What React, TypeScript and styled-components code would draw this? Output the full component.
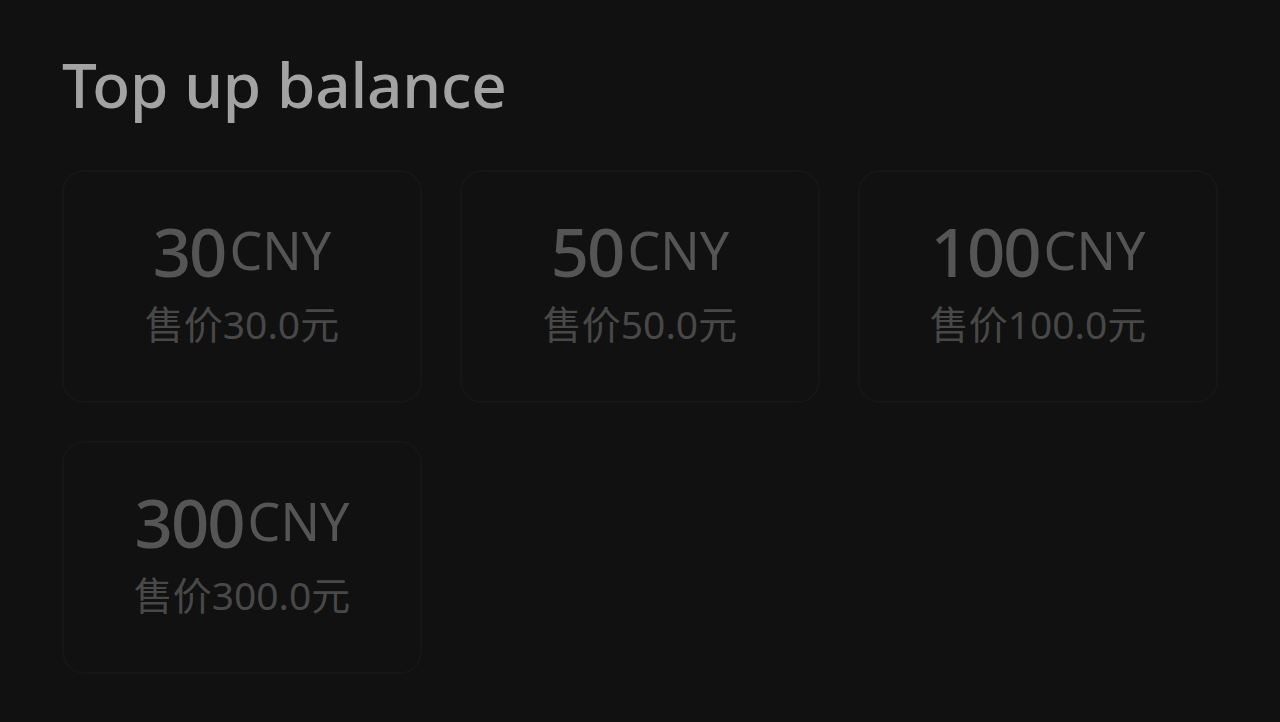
import React from "react";
import styled, { createGlobalStyle } from "styled-components";

const Global = createGlobalStyle`
  html, body { margin: 0; padding: 0; background: #111111; }
  body { font-family: "Noto Sans", "Noto Sans CJK SC", sans-serif; }
`;

const Page = styled.div`
  width: 1280px;
  height: 722px;
  box-sizing: border-box;
  padding: 44px 62px 0 62px;
  background: #111111;
`;

const Title = styled.h1`
  margin: 0 0 46px 0;
  font-family: "Noto Sans", sans-serif;
  font-weight: 500;
  font-size: 62px;
  line-height: 80px;
  color: #a3a3a3;
  letter-spacing: -0.2px;
`;

const Grid = styled.div`
  display: grid;
  grid-template-columns: repeat(3, 360px);
  column-gap: 38px;
  row-gap: 38px;
`;

const Card = styled.div`
  height: 233px;
  box-sizing: border-box;
  border: 2px solid #161616;
  border-radius: 22px;
  background: #111111;
  display: flex;
  flex-direction: column;
  align-items: center;
  justify-content: center;
  gap: 6px;
`;

const AmountRow = styled.div`
  color: #555555;
  line-height: 48px;
  white-space: nowrap;
  text-align: center;
`;

const Amount = styled.span`
  font-family: "Noto Sans", sans-serif;
  font-weight: 500;
  font-size: 67px;
  letter-spacing: -2px;
`;

const Unit = styled.span`
  font-family: "Noto Sans", sans-serif;
  font-weight: 400;
  font-size: 52px;
  margin-left: 4px;
  vertical-align: 7px;
`;

const Price = styled.div`
  font-family: "Noto Sans", "Noto Sans CJK SC", sans-serif;
  font-size: 39px;
  line-height: 46px;
  color: #484848;
`;

const items = [30, 50, 100, 300];

export default function App() {
  return (
    <>
      <Global />
      <Page>
        <Title>Top up balance</Title>
        <Grid>
          {items.map((n) => (
            <Card key={n}>
              <AmountRow>
                <Amount>{n}</Amount>
                <Unit>CNY</Unit>
              </AmountRow>
              <Price>售价{n.toFixed(1)}元</Price>
            </Card>
          ))}
        </Grid>
      </Page>
    </>
  );
}
